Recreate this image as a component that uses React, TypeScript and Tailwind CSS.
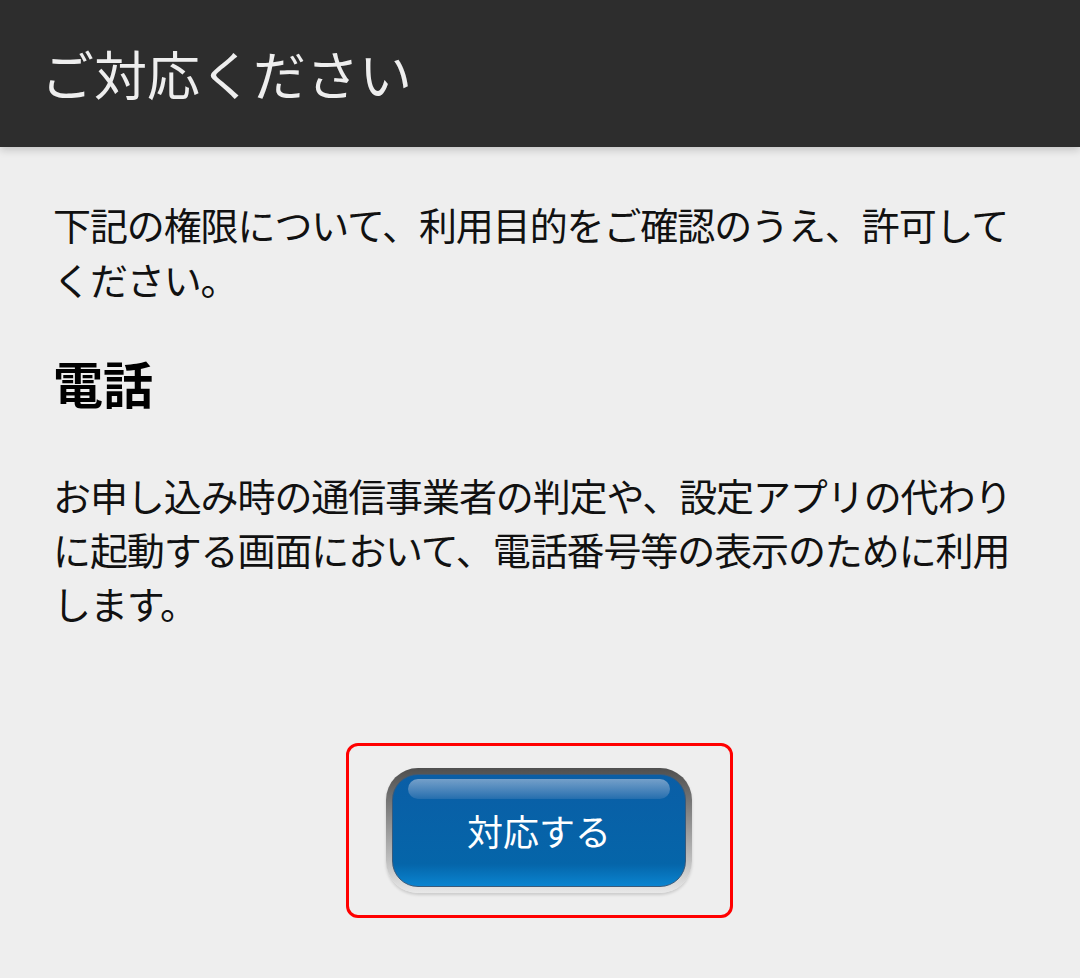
import React from 'react';

const font = { fontFamily: '"Noto Sans CJK JP", "Noto Sans", sans-serif' };

const App: React.FC = () => {
  return (
    <div className="min-h-[978px] w-full bg-[#eeeeee]" style={font}>
      {/* Header */}
      <header className="relative z-10 flex h-[147px] items-center bg-[#2d2d2d] pl-[41px] shadow-[0_3px_8px_rgba(0,0,0,0.18)]">
        <h1 className="text-[53px] font-normal leading-none text-[#eeeeee]">ご対応ください</h1>
      </header>

      {/* Body */}
      <main className="pl-[53px] pr-[55px] pt-[49px]">
        <p className="text-[38px] leading-[55px] tracking-[-1.1px] text-[#111111]">
          下記の権限について、利用目的をご確認のうえ、許可してください。
        </p>

        <h2 className="mt-[46px] text-[50px] font-bold leading-[60px] text-black">電話</h2>

        <p className="mt-[56px] text-[38px] leading-[54px] tracking-[-1.1px] text-[#111111]">
          お申し込み時の通信事業者の判定や、設定アプリの代わりに起動する画面において、電話番号等の表示のために利用します。
        </p>

        {/* Action */}
        <div className="mt-[113px] flex justify-center">
          <div className="flex h-[175px] w-[387px] items-center justify-center rounded-[12px] border-[3px] border-[#ff0000]">
            <button className="h-[125px] w-[306px] rounded-[32px] bg-gradient-to-b from-[#4f4f4f] via-[#9a9a9a] to-[#e8e8e8] p-[6px] shadow-[0_2px_3px_rgba(0,0,0,0.15)]">
              <div className="relative flex h-full w-full items-center justify-center overflow-hidden rounded-[26px] border border-[#3a5a7a] bg-gradient-to-b from-[#0a5ea6] via-[#0565a9] via-80% to-[#0a84d0]">
                <div className="absolute left-[15px] right-[15px] top-[4px] h-[20px] rounded-full bg-gradient-to-b from-[#8fb0d2] to-[#2a72b0] opacity-80" />
                <span className="relative mt-[-2px] text-[36px] leading-none text-white">対応する</span>
              </div>
            </button>
          </div>
        </div>
      </main>
    </div>
  );
};

export default App;
